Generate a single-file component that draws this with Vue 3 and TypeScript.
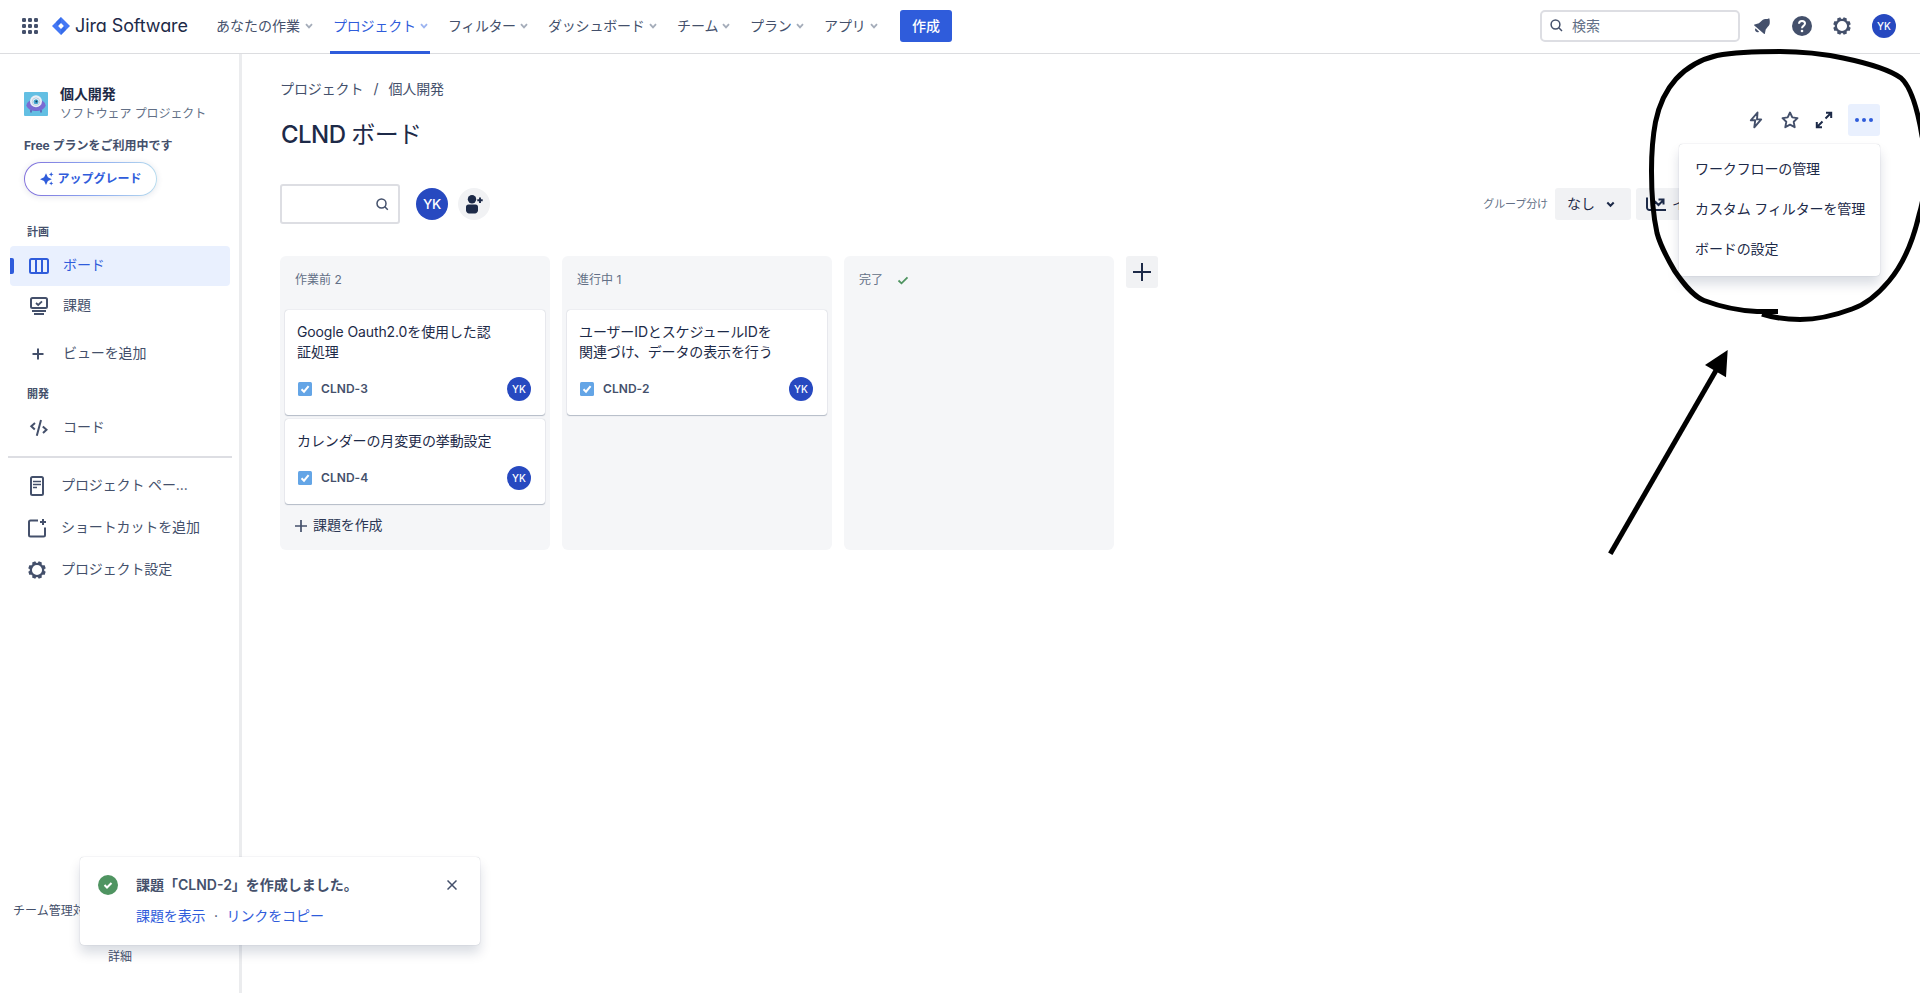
<script setup lang="ts">
interface NavItem {
  label: string
  key: string
  active?: boolean
}
interface Card {
  id: string
  lines: string[]
}
interface Column {
  name: string
  count?: number
  done?: boolean
  create?: boolean
  cards: Card[]
}

const navItems: NavItem[] = [
  { key: 'work', label: 'あなたの作業' },
  { key: 'project', label: 'プロジェクト', active: true },
  { key: 'filter', label: 'フィルター' },
  { key: 'dash', label: 'ダッシュボード' },
  { key: 'team', label: 'チーム' },
  { key: 'plan', label: 'プラン' },
  { key: 'app', label: 'アプリ' },
]

const columns: Column[] = [
  {
    name: '作業前',
    count: 2,
    create: true,
    cards: [
      { id: 'CLND-3', lines: ['Google Oauth2.0を使用した認', '証処理'] },
      { id: 'CLND-4', lines: ['カレンダーの月変更の挙動設定'] },
    ],
  },
  {
    name: '進行中',
    count: 1,
    cards: [{ id: 'CLND-2', lines: ['ユーザーIDとスケジュールIDを', '関連づけ、データの表示を行う'] }],
  },
  { name: '完了', done: true, cards: [] },
]

const heading = (col: Column): string => (col.count ? `${col.name} ${col.count}` : col.name)

const menuItems: string[] = ['ワークフローの管理', 'カスタム フィルターを管理', 'ボードの設定']
const teeth: number[] = [0, 45, 90, 135, 180, 225, 270, 315]
</script>

<template>
  <div class="page">
    <header class="topbar">
      <svg class="grid-icon" width="16" height="16" viewBox="0 0 16 16">
        <template v-for="r in 3" :key="r">
          <rect v-for="c in 3" :key="c" :x="(c - 1) * 6" :y="(r - 1) * 6" width="4" height="4" rx="1.3" />
        </template>
      </svg>
      <svg class="logo-mark" width="18" height="18" viewBox="0 0 18 18">
        <path d="M9 0 18 9 9 18 0 9Z" fill="#4478f5" />
        <path d="M9 0v6L6 9 4 5Z" fill="#2b62e0" opacity=".55" />
        <path d="M9 18v-6l3-3 2 4Z" fill="#2b62e0" opacity=".55" />
        <path d="M9 6.1 11.9 9 9 11.9 6.1 9Z" fill="#fff" />
      </svg>
      <span class="brand">Jira Software</span>
      <nav class="nav">
        <div v-for="n in navItems" :key="n.key" :class="['nav-item', n.key, { active: n.active }]">
          <span class="nav-label">{{ n.label }}</span>
          <svg width="8" height="6" viewBox="0 0 8 6"><path d="M1 1.2 4 4.4 7 1.2" /></svg>
        </div>
      </nav>
      <button class="create">作成</button>
      <div class="top-right">
        <div class="search">
          <svg width="13" height="13" viewBox="0 0 13 13">
            <circle cx="5.5" cy="5.5" r="4.4" />
            <path d="m8.8 8.8 3.2 3.2" />
          </svg>
          <span>検索</span>
        </div>
        <svg class="bell" width="18" height="18" viewBox="0 0 18 18">
          <path d="M16.2 1.3c.6 1.2.7 3.6.5 5.2-.2 1.500-.9 2.300-1.700 3.100l-2.300 2.800-.800 4.100c-.1.600-.600.700-1 .300L1.300 8.400c-.4-.5-.2-.9.300-1l4.300-1.200 3.100-2.700c1.400-1.300 3.700-1.600 5.500-1.400z" />
          <path d="M2.500 11.300a2.500 2.500 0 0 0 3.600 3.400z" />
        </svg>
        <svg class="help" width="20" height="20" viewBox="0 0 20 20">
          <circle cx="10" cy="10" r="10" fill="#44506b" />
          <path d="M7 7.800C7 5.900 8.300 4.900 10 4.900s3 1.100 3 2.700c0 2.300-3 2.300-3 4.600" fill="none" stroke="#fff" stroke-width="2" />
          <circle cx="10" cy="15" r="1.300" fill="#fff" />
        </svg>
        <svg class="gear" width="18" height="18" viewBox="-9 -9 18 18">
          <circle r="6.200" />
          <rect v-for="t in teeth" :key="t" x="-1.900" y="-8.800" width="3.800" height="2.600" rx=".8" :transform="`rotate(${t + 22.5})`" />
        </svg>
        <div class="avatar a24 top-avatar">YK</div>
      </div>
    </header>

    <div class="body">
      <aside class="side">
        <div class="project">
          <svg width="24" height="24" viewBox="0 0 24 24">
            <rect width="24" height="24" rx="1" fill="#63bfe3" />
            <path d="M7 18v2.600M17 18v2.600" stroke="#5b4aa8" stroke-width="1.300" />
            <ellipse cx="12" cy="13.200" rx="9.600" ry="5.800" fill="#7a6bd3" />
            <path d="M5 16.500c3 3 11 3 14 0-2 3.200-12 3.200-14 0z" fill="#5d4db5" />
            <circle cx="12" cy="9.200" r="6" fill="#e6eef6" />
            <circle cx="12" cy="9.600" r="3.700" fill="#fff" stroke="#a9bdd2" stroke-width=".8" />
            <circle cx="12" cy="9.700" r="2.500" fill="#43a5d0" />
            <circle cx="12.400" cy="9.400" r="1" fill="#173f5a" />
          </svg>
          <div class="project-text">
            <strong>個人開発</strong>
            <span>ソフトウェア プロジェクト</span>
          </div>
        </div>
        <div class="plan-note">Free プランをご利用中です</div>
        <button class="upgrade">
          <svg width="14" height="14" viewBox="0 0 14 14">
            <path d="M6 1.200 7.900 5.300 11.800 7.200 7.900 9.100 6 13 4.100 9.100 0 7.200 4.100 5.300Z" />
            <path d="m11.200 0 .7 1.700 1.700.7-1.700.7-.7 1.700-.7-1.700-1.700-.7 1.700-.7zM11.200 9.300l.6 1.500 1.500.6-1.500.6-.6 1.500-.6-1.500-1.500-.6 1.500-.6z" />
          </svg>
          <span>アップグレード</span>
        </button>

        <div class="group">計画</div>
        <div class="side-item selected">
          <svg width="20" height="16" viewBox="0 0 20 16">
            <rect x="1" y="1" width="18" height="14" rx="1.500" />
            <path d="M7 1v14M13 1v14" />
          </svg>
          <span>ボード</span>
        </div>
        <div class="side-item">
          <svg width="20" height="18" viewBox="0 0 20 18">
            <rect x="2" y="1" width="16" height="10" rx="1.500" />
            <path d="m7 6 2.200 2L13 4.300" stroke-width="1.800" />
            <path d="M3 14h14M5 17h10" />
          </svg>
          <span>課題</span>
        </div>
        <div class="side-item add-view">
          <svg width="20" height="20" viewBox="0 0 20 20"><path d="M3.500 10h11M9 4.500v11" /></svg>
          <span>ビューを追加</span>
        </div>
        <div class="group dev">開発</div>
        <div class="side-item code">
          <svg width="20" height="18" viewBox="0 0 20 18">
            <path d="M6 4 2.300 7.200 5.800 10.500M13.800 7.500l3.700 3.200L14 14M12 1 7.800 16.800" />
          </svg>
          <span>コード</span>
        </div>
        <hr />
        <div class="side-item low">
          <svg width="18" height="20" viewBox="0 0 18 20">
            <rect x="3" y="1" width="12" height="18" rx="1.500" />
            <path d="M5 5.500h8M5 8.500h8M5 11.500h4" stroke-width="1.700" />
          </svg>
          <span>プロジェクト ペー...</span>
        </div>
        <div class="side-item low">
          <svg width="18" height="20" viewBox="0 0 18 20">
            <path d="M10 2.500H2.500A1.500 1.500 0 0 0 1 4v13a1.500 1.500 0 0 0 1.500 1.500h13A1.500 1.500 0 0 0 17 17V9.500" />
            <path d="M15 1v6M12 4h6" />
          </svg>
          <span>ショートカットを追加</span>
        </div>
        <div class="side-item low">
          <svg class="gear" width="18" height="18" viewBox="-9 -9 18 18">
            <circle r="6.200" />
            <rect v-for="t in teeth" :key="t" x="-1.900" y="-8.800" width="3.800" height="2.600" rx=".8" :transform="`rotate(${t + 22.5})`" />
          </svg>
          <span>プロジェクト設定</span>
        </div>
        <footer class="side-foot">
          <div class="managed">チーム管理対</div>
          <div class="detail">詳細</div>
        </footer>
      </aside>

      <main class="main">
        <div class="crumbs"><span>プロジェクト</span><i>/</i><span>個人開発</span></div>
        <div class="title-row">
          <h1>CLND <span>ボード</span></h1>
          <div class="actions">
            <svg width="14" height="18" viewBox="0 0 14 18">
              <path d="M8.500 1.500 1.800 9.300h4.400L5.300 16.400 12.200 8.400H8z" fill="none" stroke="#44506b" stroke-width="1.900" stroke-linejoin="round" />
            </svg>
            <svg width="18" height="18" viewBox="0 0 18 18">
              <path d="m9 1.500 2.300 4.900 5.200.7-3.800 3.700 1 5.400L9 13.600l-4.700 2.600 1-5.400L1.500 7.100l5.200-.7z" fill="none" stroke="#44506b" stroke-width="1.900" stroke-linejoin="round" />
            </svg>
            <svg width="18" height="18" viewBox="0 0 18 18">
              <path d="M10.500 7.500 16 2M11 1.800h5.200V7M7.500 10.500 2 16M1.800 11v5.200H7" fill="none" stroke="#1d2a48" stroke-width="2" />
            </svg>
            <div class="more"><i></i><i></i><i></i></div>
          </div>
        </div>
        <div class="tools">
          <div class="board-search">
            <svg width="13" height="13" viewBox="0 0 13 13">
              <circle cx="5.500" cy="5.500" r="4.500" />
              <path d="m8.800 8.800 3 3" />
            </svg>
          </div>
          <div class="avatar a32">YK</div>
          <div class="people">
            <svg width="18" height="19" viewBox="0 0 18 19">
              <circle cx="7" cy="4.200" r="4.200" />
              <path d="M1 12a2.500 2.500 0 0 1 2.500-2.500h7A2.500 2.500 0 0 1 13 12v3.500c0 1.300-1.500 3-3 3H4c-1.500 0-3-1.700-3-3z" />
              <path d="M15 2.500v5.400M12.300 5.200h5.400" stroke="#1d2a48" stroke-width="1.900" />
            </svg>
          </div>
          <div class="tools-right">
            <span class="group-by">グループ分け</span>
            <button class="gray none">
              <span>なし</span>
              <svg width="9" height="7" viewBox="0 0 9 7"><path d="M1.300 1.500 4.500 4.800 7.700 1.500" /></svg>
            </button>
            <button class="gray insight">
              <svg width="20" height="16" viewBox="0 0 20 16">
                <path d="M1 1.500v10A2.500 2.500 0 0 0 3.500 14H20M6 9.500l3.500-3.500 3 3L17 4.500M12.500 3.500h5V8.500" />
              </svg>
              <span>イ</span>
            </button>
          </div>
        </div>

        <div class="board">
          <section v-for="col in columns" :key="col.name" class="column">
            <div class="col-head">
              <span>{{ heading(col) }}</span>
              <svg v-if="col.done" width="12" height="9" viewBox="0 0 12 9"><path d="M1.500 4.500 4.500 7.300 10.500 1.300" /></svg>
            </div>
            <article v-for="card in col.cards" :key="card.id" class="card">
              <div class="card-title"><div v-for="l in card.lines" :key="l">{{ l }}</div></div>
              <div class="card-foot">
                <svg width="14" height="14" viewBox="0 0 14 14">
                  <rect width="14" height="14" rx="1.500" fill="#64a5e6" />
                  <path d="M3.500 7.300 6 9.700 10.600 4.200" fill="none" stroke="#fff" stroke-width="2" />
                </svg>
                <span>{{ card.id }}</span>
                <div class="avatar a24">YK</div>
              </div>
            </article>
            <div v-if="col.create" class="new-issue">
              <svg width="12" height="12" viewBox="0 0 12 12"><path d="M0 6h12M6 0v12" /></svg>
              <span>課題を作成</span>
            </div>
          </section>
          <button class="add-col">
            <svg width="18" height="18" viewBox="0 0 18 18"><path d="M0 9h18M9 0v18" /></svg>
          </button>
        </div>
      </main>
    </div>

    <div class="menu">
      <div v-for="m in menuItems" :key="m">{{ m }}</div>
    </div>

    <div class="toast">
      <svg class="ok" width="20" height="20" viewBox="0 0 20 20">
        <circle cx="10" cy="10" r="10" fill="#4f9461" />
        <path d="m6.500 10 2.500 2.500L13.500 8" fill="none" stroke="#fff" stroke-width="2" />
      </svg>
      <div class="toast-text">
        <strong>課題「CLND-2」を作成しました。</strong>
        <div class="links"><a>課題を表示</a><i>·</i><a>リンクをコピー</a></div>
      </div>
      <svg class="close" width="10" height="10" viewBox="0 0 10 10"><path d="m.5.5 9 9M9.500.5l-9 9" /></svg>
    </div>

    <svg class="ink" width="1920" height="993" viewBox="0 0 1920 993">
      <path
        d="M1778 311.500H1757C1735 310.500 1716 305 1704 300.500C1692 296 1681 280 1675 271.500C1670 263 1661 248 1657 233C1653 215 1651.500 190 1651.500 171C1651.500 152 1653 135 1655.500 122C1659 105 1666 90 1676 79C1687 67 1702 59 1717 55.500C1736 52 1760 51.500 1780 51.500C1803 51.500 1824 54 1843 58C1867 63 1890 70 1901 78C1911 87 1918 112 1922 136C1929 165 1925 195 1919 215C1912 245 1900 268 1889 281C1879 293 1867 304 1852 309C1836 315 1818 319.500 1800 319.500C1786 319.500 1773 317.500 1762 314"
        fill="none"
        stroke="#000"
        stroke-width="5"
      />
      <path d="M1610.300 553.700 1716 370.500" stroke="#000" stroke-width="5" />
      <path d="M1727.700 350 1705 365 1726 377.300Z" />
    </svg>
  </div>
</template>

<style>
body {
  margin: 0;
  overflow: hidden;
}
</style>

<style scoped>
.page {
  position: relative;
  width: 1920px;
  height: 993px;
  overflow: hidden;
  background: #fff;
  color: #44506b;
  font: 14px/20px Inter, "Noto Sans CJK JP", sans-serif;
  display: flex;
  flex-direction: column;
}
* { box-sizing: border-box; }
svg { flex: none; display: block; }
button { font: inherit; border: 0; padding: 0; margin: 0; }
i { font-style: normal; }
span, strong, a { white-space: nowrap; }

.topbar {
  flex: none;
  height: 54px;
  border-bottom: 1px solid #dcdde0;
  display: flex;
  align-items: center;
  padding: 0 24px 0 22px;
}
.topbar > *, .top-right > * { margin-top: -1px; }
.grid-icon { fill: #44506b; }
.logo-mark { margin-left: 14px; }
.brand {
  margin-left: 5px;
  width: 113px;
  font-size: 18px;
  font-weight: 400;
  letter-spacing: -.1px;
  color: #1d2a48;
  font-feature-settings: "cv11";
}
.topbar .nav { display: flex; align-self: stretch; margin: 0 0 -1px 28px; gap: 15px; }
.nav-item { display: flex; align-items: center; justify-content: space-between; border-bottom: 3px solid transparent; }
.nav-item svg { fill: none; stroke: #a5adba; stroke-width: 1.800; margin-top: 1px; }
.nav-item.active { color: #2f5cdb; border-color: #2f5cdb; }
.nav-item.active svg { stroke: #9db4f0; }
.work { width: 97px; margin-right: 2px; }
.project.nav-item { width: 100px; padding: 0 2px 0 3px; }
.project .nav-label { letter-spacing: -.2px; }
.filter { width: 80px; margin-left: 3px; }
.dash { width: 109px; margin-left: 5px; }
.team { width: 53px; margin-left: 5px; }
.plan { width: 54px; margin-left: 5px; }
.app { width: 54px; margin-left: 5px; }
.filter .nav-label { letter-spacing: -.4px; }
.dash .nav-label { letter-spacing: -.2px; }
.team .nav-label, .plan .nav-label, .app .nav-label { letter-spacing: -.1px; }
.create { width: 52px; height: 32px; border-radius: 3px; background: #2f5cdb; color: #fff; font-weight: 500; margin-left: 22px; padding-bottom: 1px; }
.top-right { margin-left: auto; display: flex; align-items: center; }
.search {
  width: 200px; height: 32px; border: 2px solid #dddee3; border-radius: 5px;
  display: flex; align-items: center; padding-left: 8px; gap: 9px; color: #626f86;
}
.search svg, .board-search svg { fill: none; stroke: #44506b; stroke-width: 1.500; }
.bell { fill: #44506b; margin-left: 13px; }
.help { margin-left: 21px; }
.gear circle { fill: none; stroke: #44506b; stroke-width: 2.300; }
.gear rect { fill: #44506b; stroke: none; }
.top-right .gear { margin-left: 21px; }
.top-avatar { margin-left: 21px; }

.avatar {
  border-radius: 50%; background: #2749c0; color: #fff; font-weight: 500;
  display: flex; align-items: center; justify-content: center; flex: none;
}
.a24 { width: 24px; height: 24px; font-size: 10px; }
.a32 { width: 32px; height: 32px; font-size: 13.500px; letter-spacing: -.3px; }

.body { flex: 1; display: flex; min-height: 0; }
.side {
  width: 242px; flex: none; border-right: 3px solid #ebecee;
  display: flex; flex-direction: column; align-items: flex-start;
}
.project { display: flex; }
.side .project { margin: 30px 0 0 24px; align-items: center; gap: 12px; height: 39px; }
.side .project > svg { margin-top: 1px; }
.project-text { display: flex; flex-direction: column; }
.project-text strong { font-size: 14px; font-weight: 700; color: #1d2a48; line-height: 18px; margin-bottom: 2px; letter-spacing: -.1px; }
.project-text span { font-size: 12px; line-height: 18px; color: #626f86; letter-spacing: -.1px; }
.plan-note { margin: 14px 0 0 24px; font-size: 12px; font-weight: 700; line-height: 18px; }
.upgrade {
  margin: 7px 0 0 24px; width: 133px; height: 34px; border: 1.500px solid transparent; border-radius: 17px;
  background: linear-gradient(#fff, #fff) padding-box, linear-gradient(90deg, #8270db, #8aa6f0 50%, #b8dcee) border-box;
  box-shadow: 0 1px 6px rgba(30, 50, 90, .12);
  display: flex; align-items: center; padding-left: 14.500px; gap: 4px;
  font-size: 12px; font-weight: 700; color: #2f5cdb;
}
.upgrade svg { fill: #2f5cdb; }
.upgrade > * { margin-top: -1px; }
.group { margin: 27px 0 0 27px; height: 18px; line-height: 18px; font-size: 11px; font-weight: 700; }
.side-item {
  position: relative; width: 220px; height: 40px; margin-left: 10px; padding-left: 19px;
  display: flex; align-items: center; gap: 14px; border-radius: 4px;
}
.side-item > svg { fill: none; stroke: #44506b; stroke-width: 2; }
.side-item > span { margin-top: -2px; letter-spacing: -.12px; }
.selected { margin-top: 5px; background: #e9f0fe; color: #2f5cdb; }
.selected > svg { stroke: #2f5cdb; }
.selected::before { content: ""; position: absolute; left: 0; top: 12px; width: 4px; height: 16px; border-radius: 0 2px 2px 0; background: #2f5cdb; }
.add-view { margin-top: 8px; }
.dev { margin-top: 11px; }
.code { margin-top: 5px; }
.side hr { width: 224px; height: 2px; border: 0; background: #dddee3; margin: 8px 0 7px 8px; }
.low { height: 42px; padding-left: 18px; gap: 15px; }
.side-foot { margin-top: auto; width: 239px; font-size: 12px; line-height: 18px; padding-bottom: 27px; }
.managed { margin-left: 13px; height: 18px; white-space: nowrap; }
.detail { text-align: center; margin: 28px 0 0 1px; }

.main { flex: 1; padding: 25px 40px 0 38px; }
.crumbs { display: flex; height: 20px; letter-spacing: -.1px; }
.crumbs i { width: 25px; text-align: center; }
.title-row { display: flex; justify-content: space-between; align-items: flex-start; margin-top: 5px; height: 64px; }
h1 { margin: 15px 0 0 1px; font-size: 24px; line-height: 32px; font-weight: 500; color: #1d2a48; letter-spacing: -.55px; }
h1 span { font-weight: 400; letter-spacing: -.6px; }
.actions { display: flex; align-items: center; height: 32px; }
.actions svg:nth-child(2) { margin-left: 18px; }
.actions svg:nth-child(3) { margin-left: 16px; }
.more { margin-left: 15px; width: 32px; height: 32px; border-radius: 3px; background: #e9f0fe; display: flex; align-items: center; justify-content: center; gap: 3px; }
.more i { width: 4px; height: 4px; border-radius: 50%; background: #2f5cdb; }
.tools { display: flex; align-items: center; height: 40px; margin-top: 16px; }
.board-search { width: 120px; height: 40px; border: 2px solid #dddee3; border-radius: 3px; display: flex; align-items: center; justify-content: flex-end; padding-right: 9px; margin-right: 16px; }
.people { margin-left: 10px; width: 32px; height: 32px; border-radius: 50%; background: #f1f2f4; display: flex; align-items: center; justify-content: center; fill: #1d2a48; }
.tools-right { margin-left: auto; display: flex; align-items: center; margin-right: 196px; }
.group-by { font-size: 11px; color: #626f86; margin-right: 7px; letter-spacing: -.1px; }
.gray { height: 32px; background: #f1f2f4; border-radius: 3px; color: #1d2a48; display: flex; align-items: center; }
.gray svg { fill: none; stroke: #1d2a48; stroke-width: 2; }
.none { width: 76px; padding-left: 12px; gap: 11px; }
.insight { width: 48px; margin-left: 5px; padding-left: 10px; gap: 6px; }

.board { display: flex; gap: 12px; margin-top: 32px; align-items: flex-start; }
.column { width: 270px; height: 294px; border-radius: 6px; background: #f5f6f8; padding: 0 5px; }
.col-head { height: 54px; padding: 15px 0 0 10px; font-size: 12px; line-height: 18px; color: #626f86; display: flex; }
.col-head svg { margin: 5px 0 0 14px; fill: none; stroke: #4f9461; stroke-width: 1.800; }
.card { background: #fff; border-radius: 3px; width: 260px; margin-bottom: 4px; padding: 12px 14px 14px 12px; box-shadow: 0 1px 1px rgba(9, 30, 66, .25), 0 0 1px rgba(9, 30, 66, .31); }
.card-title { color: #1d2a48; line-height: 20px; letter-spacing: -.12px; }
.card-foot { display: flex; align-items: center; height: 24px; margin: 15px 0 0 1px; }
.card-foot span { font-size: 12px; font-weight: 600; margin-left: 9px; letter-spacing: .05px; }
.card-foot .avatar { margin-left: auto; }
.new-issue { display: flex; align-items: center; margin: 12px 0 0 10px; gap: 6px; height: 20px; color: #2c3855; }
.new-issue span { margin-top: -2px; letter-spacing: -.1px; }
.new-issue svg { stroke: #44506b; stroke-width: 1.700; }
.add-col { width: 32px; height: 32px; border-radius: 3px; background: #f1f2f4; display: flex; align-items: center; justify-content: center; }
.add-col svg { stroke: #1d2a48; stroke-width: 2; }

.menu {
  position: absolute; left: 1679px; top: 144px; width: 201px; height: 132px; padding: 5px 0;
  background: #fff; border-radius: 4px; color: #1d2a48;
  box-shadow: 0 8px 12px rgba(9, 30, 66, .15), 0 0 1px rgba(9, 30, 66, .31);
}
.menu div { height: 40px; line-height: 40px; padding-left: 16px; white-space: nowrap; letter-spacing: -.12px; }
.toast {
  position: absolute; left: 80px; top: 857px; width: 400px; height: 88px; padding: 18px 23px 0 18px;
  background: #fff; border-radius: 4px; display: flex; align-items: flex-start;
  box-shadow: 0 8px 12px rgba(9, 30, 66, .15), 0 0 1px rgba(9, 30, 66, .31);
}
.toast-text { margin-left: 18px; flex: 1; }
.toast strong { display: block; font-weight: 600; line-height: 20px; }
.links { display: flex; margin-top: 11px; color: #2f5cdb; letter-spacing: -.1px; }
.links i { width: 21px; text-align: center; color: #44506b; }
.close { stroke: #44506b; stroke-width: 1.500; margin-top: 5px; }
.ink { position: absolute; left: 0; top: 0; pointer-events: none; }
</style>
